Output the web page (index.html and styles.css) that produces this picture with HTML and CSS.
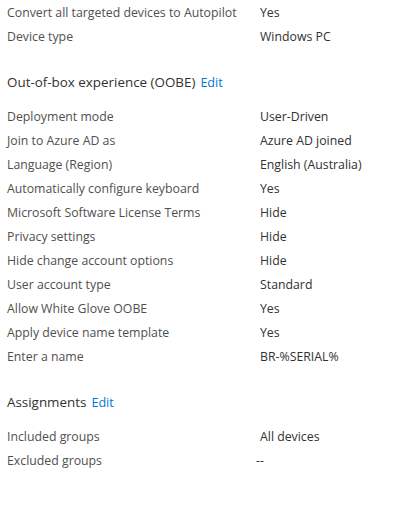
FILE: index.html
```html
<!DOCTYPE html>
<html>
<head>
<meta charset="utf-8">
<link rel="stylesheet" href="styles.css">
</head>
<body>
<div class="page">
  <div class="rows">
    <div class="row"><span class="label">Convert all targeted devices to Autopilot</span><span class="value">Yes</span></div>
    <div class="row"><span class="label">Device type</span><span class="value">Windows PC</span></div>
  </div>

  <div class="heading"><span class="title">Out-of-box experience (OOBE)</span><a class="edit">Edit</a></div>
  <div class="rows">
    <div class="row"><span class="label">Deployment mode</span><span class="value">User-Driven</span></div>
    <div class="row"><span class="label">Join to Azure AD as</span><span class="value">Azure AD joined</span></div>
    <div class="row"><span class="label">Language (Region)</span><span class="value">English (Australia)</span></div>
    <div class="row"><span class="label">Automatically configure keyboard</span><span class="value">Yes</span></div>
    <div class="row"><span class="label">Microsoft Software License Terms</span><span class="value">Hide</span></div>
    <div class="row"><span class="label">Privacy settings</span><span class="value">Hide</span></div>
    <div class="row"><span class="label">Hide change account options</span><span class="value">Hide</span></div>
    <div class="row"><span class="label">User account type</span><span class="value">Standard</span></div>
    <div class="row"><span class="label">Allow White Glove OOBE</span><span class="value">Yes</span></div>
    <div class="row"><span class="label">Apply device name template</span><span class="value">Yes</span></div>
    <div class="row"><span class="label">Enter a name</span><span class="value">BR-%SERIAL%</span></div>
  </div>

  <div class="heading"><span class="title">Assignments</span><a class="edit">Edit</a></div>
  <div class="rows">
    <div class="row"><span class="label">Included groups</span><span class="value">All devices</span></div>
    <div class="row"><span class="label">Excluded groups</span><span class="value empty">--</span></div>
  </div>
</div>
</body>
</html>
```

FILE: styles.css
```css
html, body {
  margin: 0;
  padding: 0;
  background: #ffffff;
}

.page {
  font-family: "Open Sans", "Noto Sans", sans-serif;
  font-size: 12.3px;
  padding-left: 7px;
}

.rows {
  display: flex;
  flex-direction: column;
}

.row {
  display: flex;
  height: 24px;
  align-items: center;
}

.label {
  width: 253px;
  color: #505050;
  white-space: nowrap;
}

.value {
  color: #323130;
  white-space: nowrap;
}

.value.empty {
  margin-left: -4px;
}

.heading {
  margin-top: 22px;
  margin-bottom: 10px;
  height: 24px;
  display: flex;
  align-items: center;
  gap: 5px;
  color: #323130;
}

.title {
  font-size: 13.4px;
  white-space: nowrap;
}

.edit {
  color: #0078d4;
  font-size: 12.6px;
}
```
